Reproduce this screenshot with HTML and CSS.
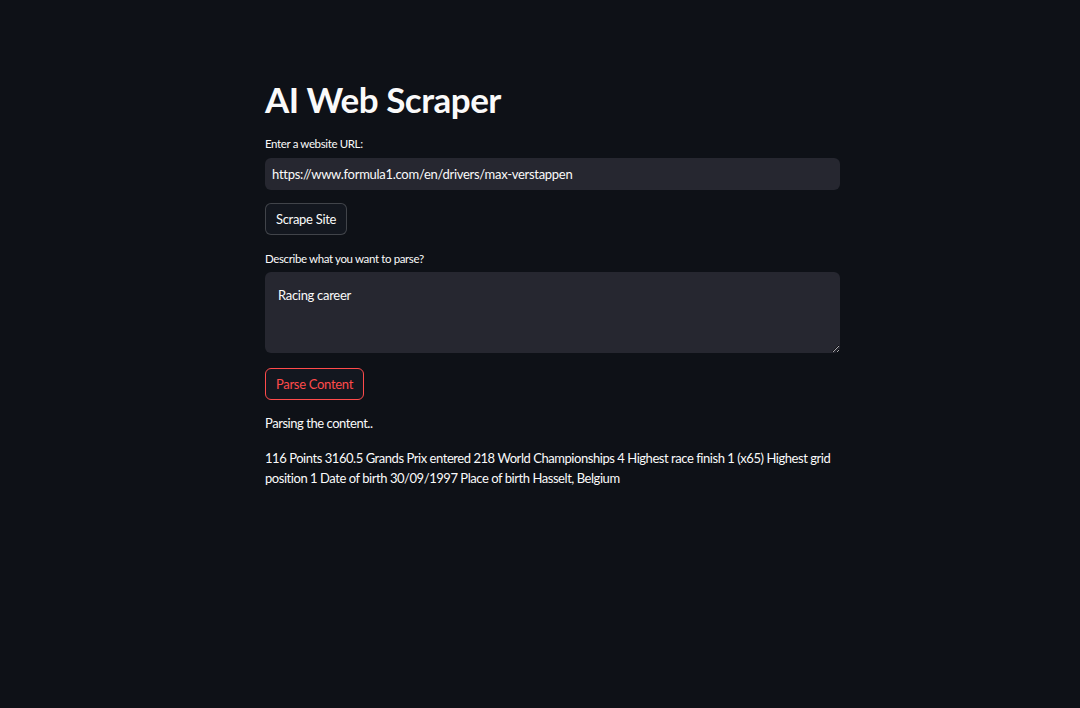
FILE: index.html
```html
<!DOCTYPE html>
<html lang="en">
<head>
<meta charset="utf-8">
<title>AI Web Scraper</title>
<link rel="stylesheet" href="styles.css">
</head>
<body>
<main class="main">
  <h1 class="title">AI Web Scraper</h1>
  <div class="field">
    <label class="label" for="url">Enter a website URL:</label>
    <input class="input" id="url" type="text" value="https://www.formula1.com/en/drivers/max-verstappen">
  </div>
  <button class="btn">Scrape Site</button>
  <div class="field field-area">
    <label class="label" for="desc">Describe what you want to parse?</label>
    <textarea class="textarea" id="desc">Racing career</textarea>
  </div>
  <button class="btn btn-focus">Parse Content</button>
  <p class="text status">Parsing the content..</p>
  <p class="text result">116 Points 3160.5 Grands Prix entered 218 World Championships 4 Highest race finish 1 (x65) Highest grid position 1 Date of birth 30/09/1997 Place of birth Hasselt, Belgium</p>
</main>
</body>
</html>
```

FILE: styles.css
```css
html, body {
  margin: 0;
  padding: 0;
  background: #0e1117;
  color: #fafafa;
  font-family: Lato, "Noto Sans", sans-serif;
  color-scheme: dark;
}

.main {
  width: 575px;
  margin-left: 265px;
  padding-top: 78px;
  display: flex;
  flex-direction: column;
  align-items: flex-start;
}

.title {
  margin: 0;
  font-size: 35px;
  line-height: 42px;
  font-weight: 700;
  letter-spacing: -0.5px;
  color: #fafafa;
}

.field {
  display: flex;
  flex-direction: column;
  width: 100%;
  margin-top: 16px;
}

.label {
  font-size: 11.5px;
  line-height: 16px;
  letter-spacing: -0.37px;
  margin-bottom: 6px;
  color: #fafafa;
}

.field-area .label {
  margin-bottom: 5px;
}

.input {
  box-sizing: border-box;
  width: 100%;
  height: 32px;
  border: none;
  border-radius: 6px;
  background: #262730;
  color: #fafafa;
  font-family: inherit;
  font-size: 13px;
  letter-spacing: -0.28px;
  padding: 0 7px;
  outline: none;
}

.textarea {
  box-sizing: border-box;
  width: 100%;
  height: 81px;
  border: none;
  border-radius: 6px;
  background: #262730;
  color: #fafafa;
  font-family: inherit;
  font-size: 13px;
  line-height: 21px;
  letter-spacing: -0.3px;
  padding: 13px;
  resize: vertical;
  outline: none;
}

.btn {
  box-sizing: border-box;
  height: 32px;
  margin-top: 13px;
  padding: 0 10px;
  border: 1px solid rgba(250, 250, 250, 0.2);
  border-radius: 6px;
  background: #13171f;
  color: #fafafa;
  font-family: inherit;
  font-size: 13px;
  letter-spacing: -0.3px;
}

.btn-focus {
  margin-top: 15px;
  border-color: #ff4b4b;
  color: #ff4b4b;
}

.text {
  margin: 0;
  font-size: 13px;
  line-height: 20px;
  letter-spacing: -0.45px;
}

.status {
  margin-top: 13px;
  line-height: 21px;
}

.result {
  margin-top: 14px;
}
```
